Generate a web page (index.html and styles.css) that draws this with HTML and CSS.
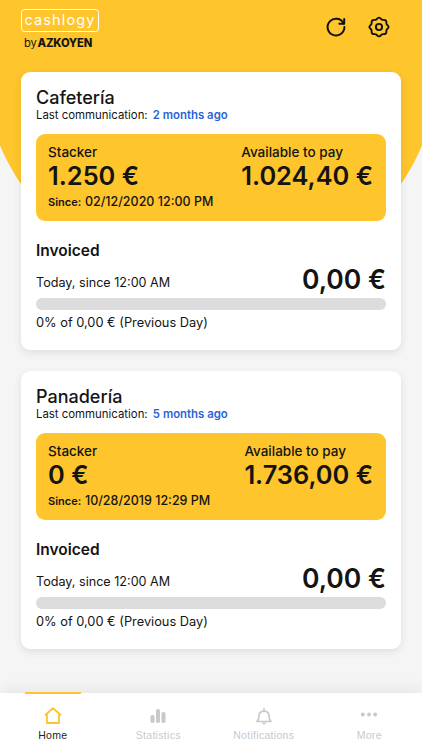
FILE: index.html
```html
<!DOCTYPE html>
<html lang="en">
<head>
<meta charset="utf-8">
<title>Cashlogy</title>
<link rel="stylesheet" href="styles.css">
</head>
<body>
<div class="app">
  <main class="main">
    <header class="header">
      <div class="brand">
        <div class="logo">cashlogy</div>
        <div class="by">by<b>AZKOYEN</b></div>
      </div>
      <div class="actions">
        <svg class="action" viewBox="0 0 24 24" fill="none" stroke="#111" stroke-width="2" stroke-linecap="round" stroke-linejoin="round"><path d="M19.600 8.500A8.400 8.400 0 1 0 20.400 12"/><path d="M20.200 4v4.800h-4.800"/></svg>
        <svg class="action" viewBox="0 0 24 24" fill="none" stroke="#111" stroke-width="1.900" stroke-linejoin="round"><circle cx="12" cy="12" r="3.100"/><path d="M12 2.600c1.600 0 2 1.600 3 2.100 1.100.5 2.700-.3 3.800.8s.3 2.600.8 3.700c.5 1 2 1.300 2 2.800s-1.500 1.800-2 2.800c-.5 1.100.3 2.600-.8 3.700s-2.700.3-3.800.8c-1 .5-1.400 2.100-3 2.100s-2-1.600-3-2.100c-1.100-.5-2.700.3-3.800-.8s-.3-2.600-.8-3.700c-.5-1-2-1.300-2-2.800s1.500-1.800 2-2.800c.5-1.100-.3-2.600.8-3.700s2.700-.3 3.800-.8c1-.5 1.400-2.100 3-2.100z"/></svg>
      </div>
    </header>

    <section class="card">
      <h2 class="name">Cafetería</h2>
      <p class="comm">Last communication: <span class="ago">2 months ago</span></p>
      <div class="panel">
        <div class="panel-row">
          <div class="col">
            <div class="label">Stacker</div>
            <div class="amount">1.250 €</div>
          </div>
          <div class="col">
            <div class="label">Available to pay</div>
            <div class="amount">1.024,40 €</div>
          </div>
        </div>
        <div class="since">Since: <b>02/12/2020 12:00 PM</b></div>
      </div>
      <h3 class="inv">Invoiced</h3>
      <div class="today-row">
        <span class="today">Today, since 12:00 AM</span>
        <span class="total">0,00 €</span>
      </div>
      <div class="bar"></div>
      <p class="prev">0% of 0,00 € (Previous Day)</p>
    </section>

    <section class="card">
      <h2 class="name">Panadería</h2>
      <p class="comm">Last communication: <span class="ago">5 months ago</span></p>
      <div class="panel">
        <div class="panel-row">
          <div class="col">
            <div class="label">Stacker</div>
            <div class="amount">0 €</div>
          </div>
          <div class="col">
            <div class="label">Available to pay</div>
            <div class="amount">1.736,00 €</div>
          </div>
        </div>
        <div class="since">Since: <b>10/28/2019 12:29 PM</b></div>
      </div>
      <h3 class="inv">Invoiced</h3>
      <div class="today-row">
        <span class="today">Today, since 12:00 AM</span>
        <span class="total">0,00 €</span>
      </div>
      <div class="bar"></div>
      <p class="prev">0% of 0,00 € (Previous Day)</p>
    </section>
  </main>

  <nav class="tabs">
    <div class="tab tab-active">
      <svg class="tab-icon" viewBox="0 0 20 20" fill="none" stroke="#fcc42e" stroke-width="1.800" stroke-linejoin="round"><path d="M10 2.200 17.500 8.800 16 8.800V17H4V8.800H2.500z"/></svg>
      <span>Home</span>
    </div>
    <div class="tab">
      <svg class="tab-icon" viewBox="0 0 20 20" fill="#c9c9c9"><rect x="2.500" y="9" width="4" height="8" rx="1.800"/><rect x="8" y="3" width="4" height="14" rx="1.800"/><rect x="13.500" y="6" width="4" height="11" rx="1.800"/></svg>
      <span>Statistics</span>
    </div>
    <div class="tab">
      <svg class="tab-icon" viewBox="0 0 20 20" fill="none" stroke="#c9c9c9" stroke-width="1.700" stroke-linejoin="round"><path d="M3 15.500c1.500-1 1.800-2 1.800-4.500 0-3.500 2-5.800 5.200-5.800s5.200 2.300 5.200 5.800c0 2.500.3 3.500 1.800 4.500z"/><path d="M10 2.500v2.500M9 17.300h2" stroke-linecap="round"/></svg>
      <span>Notifications</span>
    </div>
    <div class="tab">
      <svg class="tab-icon" viewBox="0 0 20 20" fill="#c9c9c9"><circle cx="3.800" cy="8.500" r="1.900"/><circle cx="10" cy="8.500" r="1.900"/><circle cx="16.200" cy="8.500" r="1.900"/></svg>
      <span>More</span>
    </div>
  </nav>
</div>
</body>
</html>
```
FILE: styles.css
```css
* { box-sizing: border-box; }
html, body { margin: 0; padding: 0; }
body { font-family: Inter, "Liberation Sans", sans-serif; color: #141414; background: #f5f5f5; }
h2, h3, p { margin: 0; }

.app { width: 422px; height: 750px; display: flex; flex-direction: column; overflow: hidden; }
.main {
  flex: 1;
  padding: 0 21px;
  background: radial-gradient(circle 229.500px at 211px 56px, #fec52d 99.700%, #f5f5f5 100%);
}

.header { height: 72px; display: flex; justify-content: space-between; padding-top: 9px; }
.brand { width: 78px; display: flex; flex-direction: column; }
.logo {
  height: 23px;
  border: 1px solid #fff;
  border-radius: 3.500px;
  color: #fff;
  font-size: 14.500px;
  line-height: 20px;
  letter-spacing: 1.100px;
  font-weight: 400;
  text-align: center;
}
.by { margin: 5px 0 0 3px; font-size: 11.200px; line-height: 12px; letter-spacing: -.2px; white-space: nowrap; }
.by b { font-weight: 800; letter-spacing: -.2px; margin-left: 1px; }

.actions { display: flex; gap: 19px; margin-top: 6px; margin-right: 10px; height: 24px; }
.action { width: 24px; height: 24px; }

.card {
  height: 278px;
  margin-bottom: 21px;
  padding: 15px 15px 0;
  background: #fff;
  border-radius: 9px;
  box-shadow: 0 3px 8px rgba(0,0,0,.09);
}
.name { font-size: 18px; line-height: 21px; font-weight: 500; }
.comm { font-size: 11.400px; line-height: 14px; }
.ago { margin-left: 2px; color: #2a62d8; font-weight: 600; }

.panel {
  height: 87px;
  margin-top: 12px;
  padding: 11px 13px 0 12px;
  background: #fec52d;
  border-radius: 9px;
}
.panel-row { display: flex; justify-content: space-between; }
.label { font-size: 13.500px; line-height: 15px; font-weight: 500; }
.amount { font-size: 25.400px; line-height: 26px; font-weight: 600; margin-top: 3px; white-space: nowrap; }
.since { font-size: 11px; line-height: 14px; font-weight: 600; margin-top: 6px; }
.since b { font-size: 12.500px; font-weight: 500; margin-left: 1px; }

.inv { margin-top: 20px; font-size: 15.500px; line-height: 19px; font-weight: 600; }
.today-row { display: flex; justify-content: space-between; align-items: flex-end; height: 30px; margin-top: 4px; }
.today { font-size: 12.600px; line-height: 17px; margin-bottom: 3px; }
.total { font-size: 26.500px; line-height: 30px; font-weight: 600; }
.bar { height: 12px; margin-top: 4px; border-radius: 6px; background: #dcdcdc; }
.prev { margin-top: 4px; font-size: 12.800px; line-height: 17px; }

.tabs {
  height: 57px;
  display: flex;
  background: #fff;
  box-shadow: 0 -6px 12px rgba(0,0,0,.05);
}
.tab {
  flex: 1;
  display: flex;
  flex-direction: column;
  align-items: center;
  padding-top: 13px;
  font-family: "Liberation Sans", sans-serif;
  font-size: 10.500px;
  line-height: 12px;
  letter-spacing: .3px;
  color: #c9c9c9;
  gap: 3px;
}
.tab-active { color: #222; position: relative; }
.tab-active::before {
  content: "";
  position: absolute;
  top: -1px;
  left: 25px;
  width: 56px;
  height: 2px;
  background: #fcc42e;
}
.tab-icon { width: 20px; height: 20px; }
```
